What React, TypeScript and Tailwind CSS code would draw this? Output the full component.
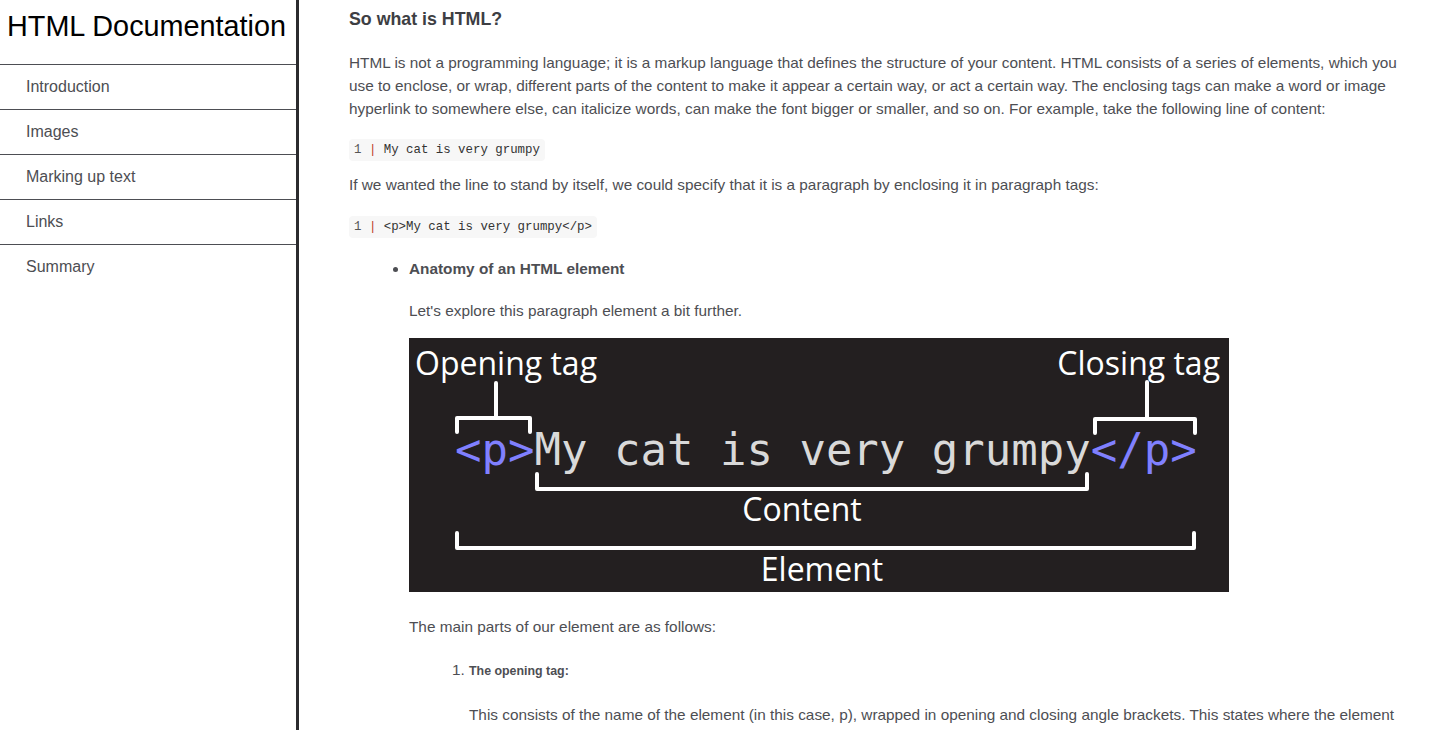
const navItems = ["Introduction", "Images", "Marking up text", "Links", "Summary"];

const AnatomyDiagram = () => (
  <svg width="820" height="254" viewBox="0 0 820 254" className="block">
    <rect width="820" height="254" fill="#231f20" />
    <g fill="#ffffff" fontFamily="'Open Sans', sans-serif" fontSize="32">
      <text x="6" y="37">Opening tag</text>
      <text x="811" y="37" textAnchor="end">Closing tag</text>
      <text x="393" y="183" textAnchor="middle">Content</text>
      <text x="413" y="243" textAnchor="middle">Element</text>
    </g>
    <text x="46" y="127" fontSize="44" fontFamily="'DejaVu Sans Mono', monospace">
      <tspan fill="#8080ff">&lt;p&gt;</tspan>
      <tspan fill="#d9d9d9">My cat is very grumpy</tspan>
      <tspan fill="#8080ff">&lt;/p&gt;</tspan>
    </text>
    <g stroke="#ffffff" strokeWidth="4" fill="none" strokeLinecap="round" strokeLinejoin="round">
      {/* opening tag bracket */}
      <path d="M87 45 V80 M48 94 V80 H121 V94" />
      {/* closing tag bracket */}
      <path d="M738 44 V81 M686 95 V81 H786 V95" />
      {/* content */}
      <path d="M128 136 V151 H678 V136" />
      {/* element */}
      <path d="M48 195 V210 H785 V195" />
    </g>
  </svg>
);

const CodeLine = ({ children }: { children: string }) => (
  <div className="inline-block self-start rounded bg-[#f7f7f7] pl-[5px] pr-[5px] font-['Liberation_Mono',monospace] text-[12.4px] leading-[22px] text-[#333]">
    <span className="text-[#555]">1</span> <span className="text-[#c0392b]">|</span> {children}
  </div>
);

export default function App() {
  return (
    <div className="flex h-[730px] overflow-hidden bg-white font-['Liberation_Sans',Arial,sans-serif]">
      <nav className="w-[299px] shrink-0 border-r-[3px] border-[#2b2b2e]">
        <header className="h-[64px] pl-[7px] pt-[8px] text-[28.8px] leading-[36px] text-black">
          HTML Documentation
        </header>
        <ul>
          {navItems.map((item) => (
            <li key={item} className="h-[45px] border-t border-[#4d4e53] pl-[26px] pt-[11px] text-[16px] leading-[22px] text-[#4d4e53]">
              {item}
            </li>
          ))}
        </ul>
      </nav>

      <main className="flex min-w-0 flex-1 flex-col pl-[50px] pr-[20px] text-[15.35px] leading-[23px] text-[#4d4e53]">
        <h2 className="mt-[8px] text-[17.8px] font-bold leading-[22px] text-[#3d3e43]">So what is HTML?</h2>
        <p className="mt-[21px]">
          HTML is not a programming language; it is a markup language that defines the structure of your content. HTML
          consists of a series of elements, which you use to enclose, or wrap, different parts of the content to make it
          appear a certain way, or act a certain way. The enclosing tags can make a word or image hyperlink to somewhere
          else, can italicize words, can make the font bigger or smaller, and so on. For example, take the following line
          of content:
        </p>
        <div className="mt-[19px] flex">
          <CodeLine>My cat is very grumpy</CodeLine>
        </div>
        <p className="mt-[12px]">
          If we wanted the line to stand by itself, we could specify that it is a paragraph by enclosing it in paragraph
          tags:
        </p>
        <div className="mt-[20px] flex">
          <CodeLine>{"<p>My cat is very grumpy</p>"}</CodeLine>
        </div>

        <ul className="mt-[19px] list-disc pl-[60px]">
          <li>
            <span className="font-bold">Anatomy of an HTML element</span>
            <p className="mt-[19px]">Let's explore this paragraph element a bit further.</p>
            <div className="mt-[16px]">
              <AnatomyDiagram />
            </div>
            <p className="mt-[23px]">The main parts of our element are as follows:</p>
            <ol className="mt-[20px] list-decimal pl-[60px]">
              <li>
                <span className="text-[12.4px] font-bold leading-[16px]">The opening tag:</span>
                <p className="mt-[22px]">
                  This consists of the name of the element (in this case, p), wrapped in opening and closing angle
                  brackets. This states where the element begins or starts to take effect.
                </p>
              </li>
            </ol>
          </li>
        </ul>
      </main>
    </div>
  );
}
